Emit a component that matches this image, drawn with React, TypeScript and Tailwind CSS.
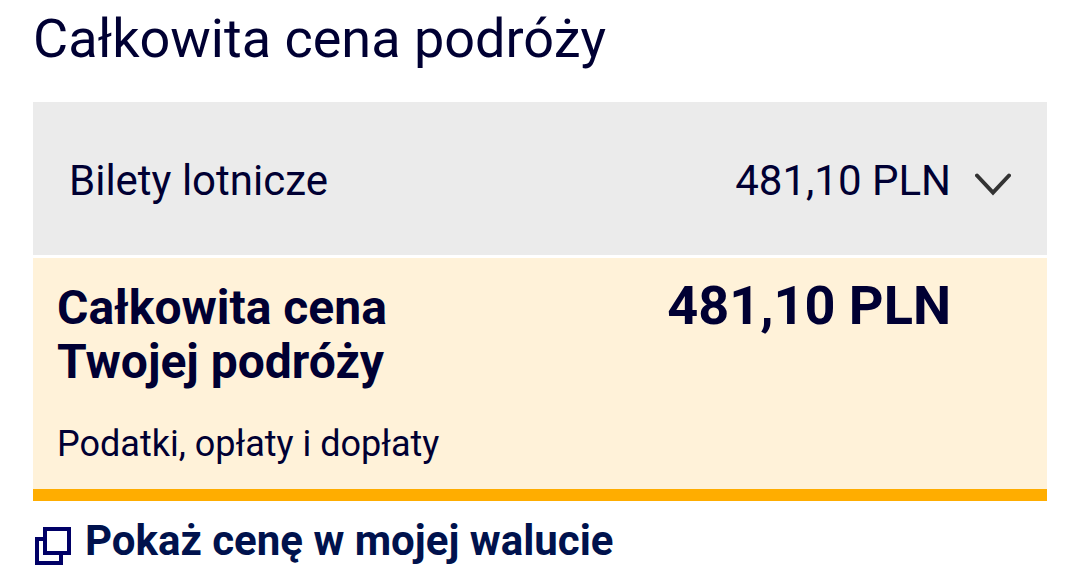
export default function App() {
  return (
    <main className="min-h-screen bg-white px-[33px] font-['Roboto',sans-serif] text-[#000033]">
      <h1 className="pt-2 text-[54px] leading-[62px]">Całkowita cena podróży</h1>
      <section className="mt-8">
        <button type="button" className="flex w-full items-center bg-[#ebebeb] px-9 pt-[52px] pb-12 text-left text-[42px] leading-[53px]">
          <span className="grow">Bilety lotnicze</span>
          <span>481,10 PLN</span>
          <svg className="mt-2 ml-6 h-[23px] w-9 shrink-0" viewBox="0 0 36 23" fill="none" stroke="#333333" strokeWidth="4" strokeLinecap="round" aria-hidden="true">
            <path d="M2 2.5 18 19.5 34 2.5" />
          </svg>
        </button>
        <div className="mt-[3px] border-b-12 border-[#ffad00] bg-[#fff2d9] pt-[23px] pr-24 pb-5 pl-6">
          <div className="flex items-start justify-between font-bold">
            <h2 className="w-[400px] text-[48px] leading-[54px]">Całkowita cena Twojej podróży</h2>
            <p className="text-[54px] leading-[50px]">481,10 PLN</p>
          </div>
          <p className="mt-[31px] text-[36px] leading-[49px]">Podatki, opłaty i dopłaty</p>
        </div>
      </section>
      <a href="#waluta" className="mt-[13px] flex items-center text-[42px] leading-[54px] font-bold text-[#00124d]">
        <svg className="mt-[10px] mr-[14px] ml-[2px] h-[38px] w-9 shrink-0" viewBox="0 0 36 38" fill="none" stroke="#000066" strokeWidth="4" aria-hidden="true">
          <path d="M10 2H34V26H10ZM10 12H2V36H26V26" />
        </svg>
        Pokaż cenę w mojej walucie
      </a>
    </main>
  );
}
